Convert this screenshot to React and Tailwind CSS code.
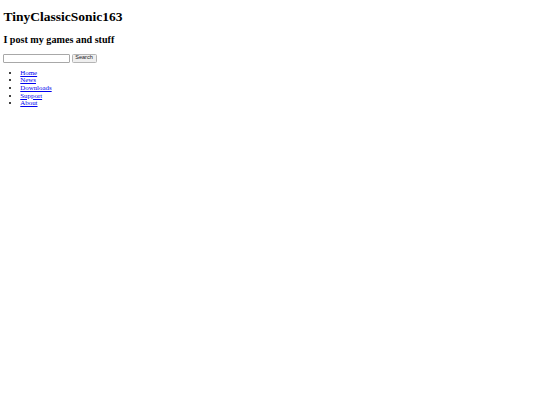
import React from "react";

const links = ["Home", "News", "Downloads", "Support", "About"];

export default function App() {
  return (
    <div className="min-h-[405px] bg-white px-[3.4px] pt-[9px] font-['Liberation_Serif',serif] text-black">
      <h1 className="mb-[9px] text-[13.5px] font-bold leading-[15.5px]">
        TinyClassicSonic163
      </h1>
      <h2 className="mb-[8.4px] text-[10.125px] font-bold leading-[11.6px]">
        I post my games and stuff
      </h2>
      <form
        className="flex h-[9.4px] items-center gap-[1.7px]"
        onSubmit={(e) => e.preventDefault()}
      >
        <input
          type="text"
          className="h-[8.9px] w-[66.5px] rounded-[1px] border border-[#a8a8a8] bg-white px-[1px] text-[5.6px] outline-none"
        />
        <button
          type="submit"
          className="h-[8.9px] rounded-[1.5px] border border-[#b4b4b4] bg-[#efefef] px-[2.6px] font-['Liberation_Sans',sans-serif] text-[5.6px] leading-none text-[#222]"
        >
          Search
        </button>
      </form>
      <ul className="mt-[5.8px] list-disc pl-[16.9px] text-[6.9px] leading-[7.7px]">
        {links.map((name) => (
          <li key={name}>
            <a href="#" className="text-[#0000ee] underline">
              {name}
            </a>
          </li>
        ))}
      </ul>
    </div>
  );
}
